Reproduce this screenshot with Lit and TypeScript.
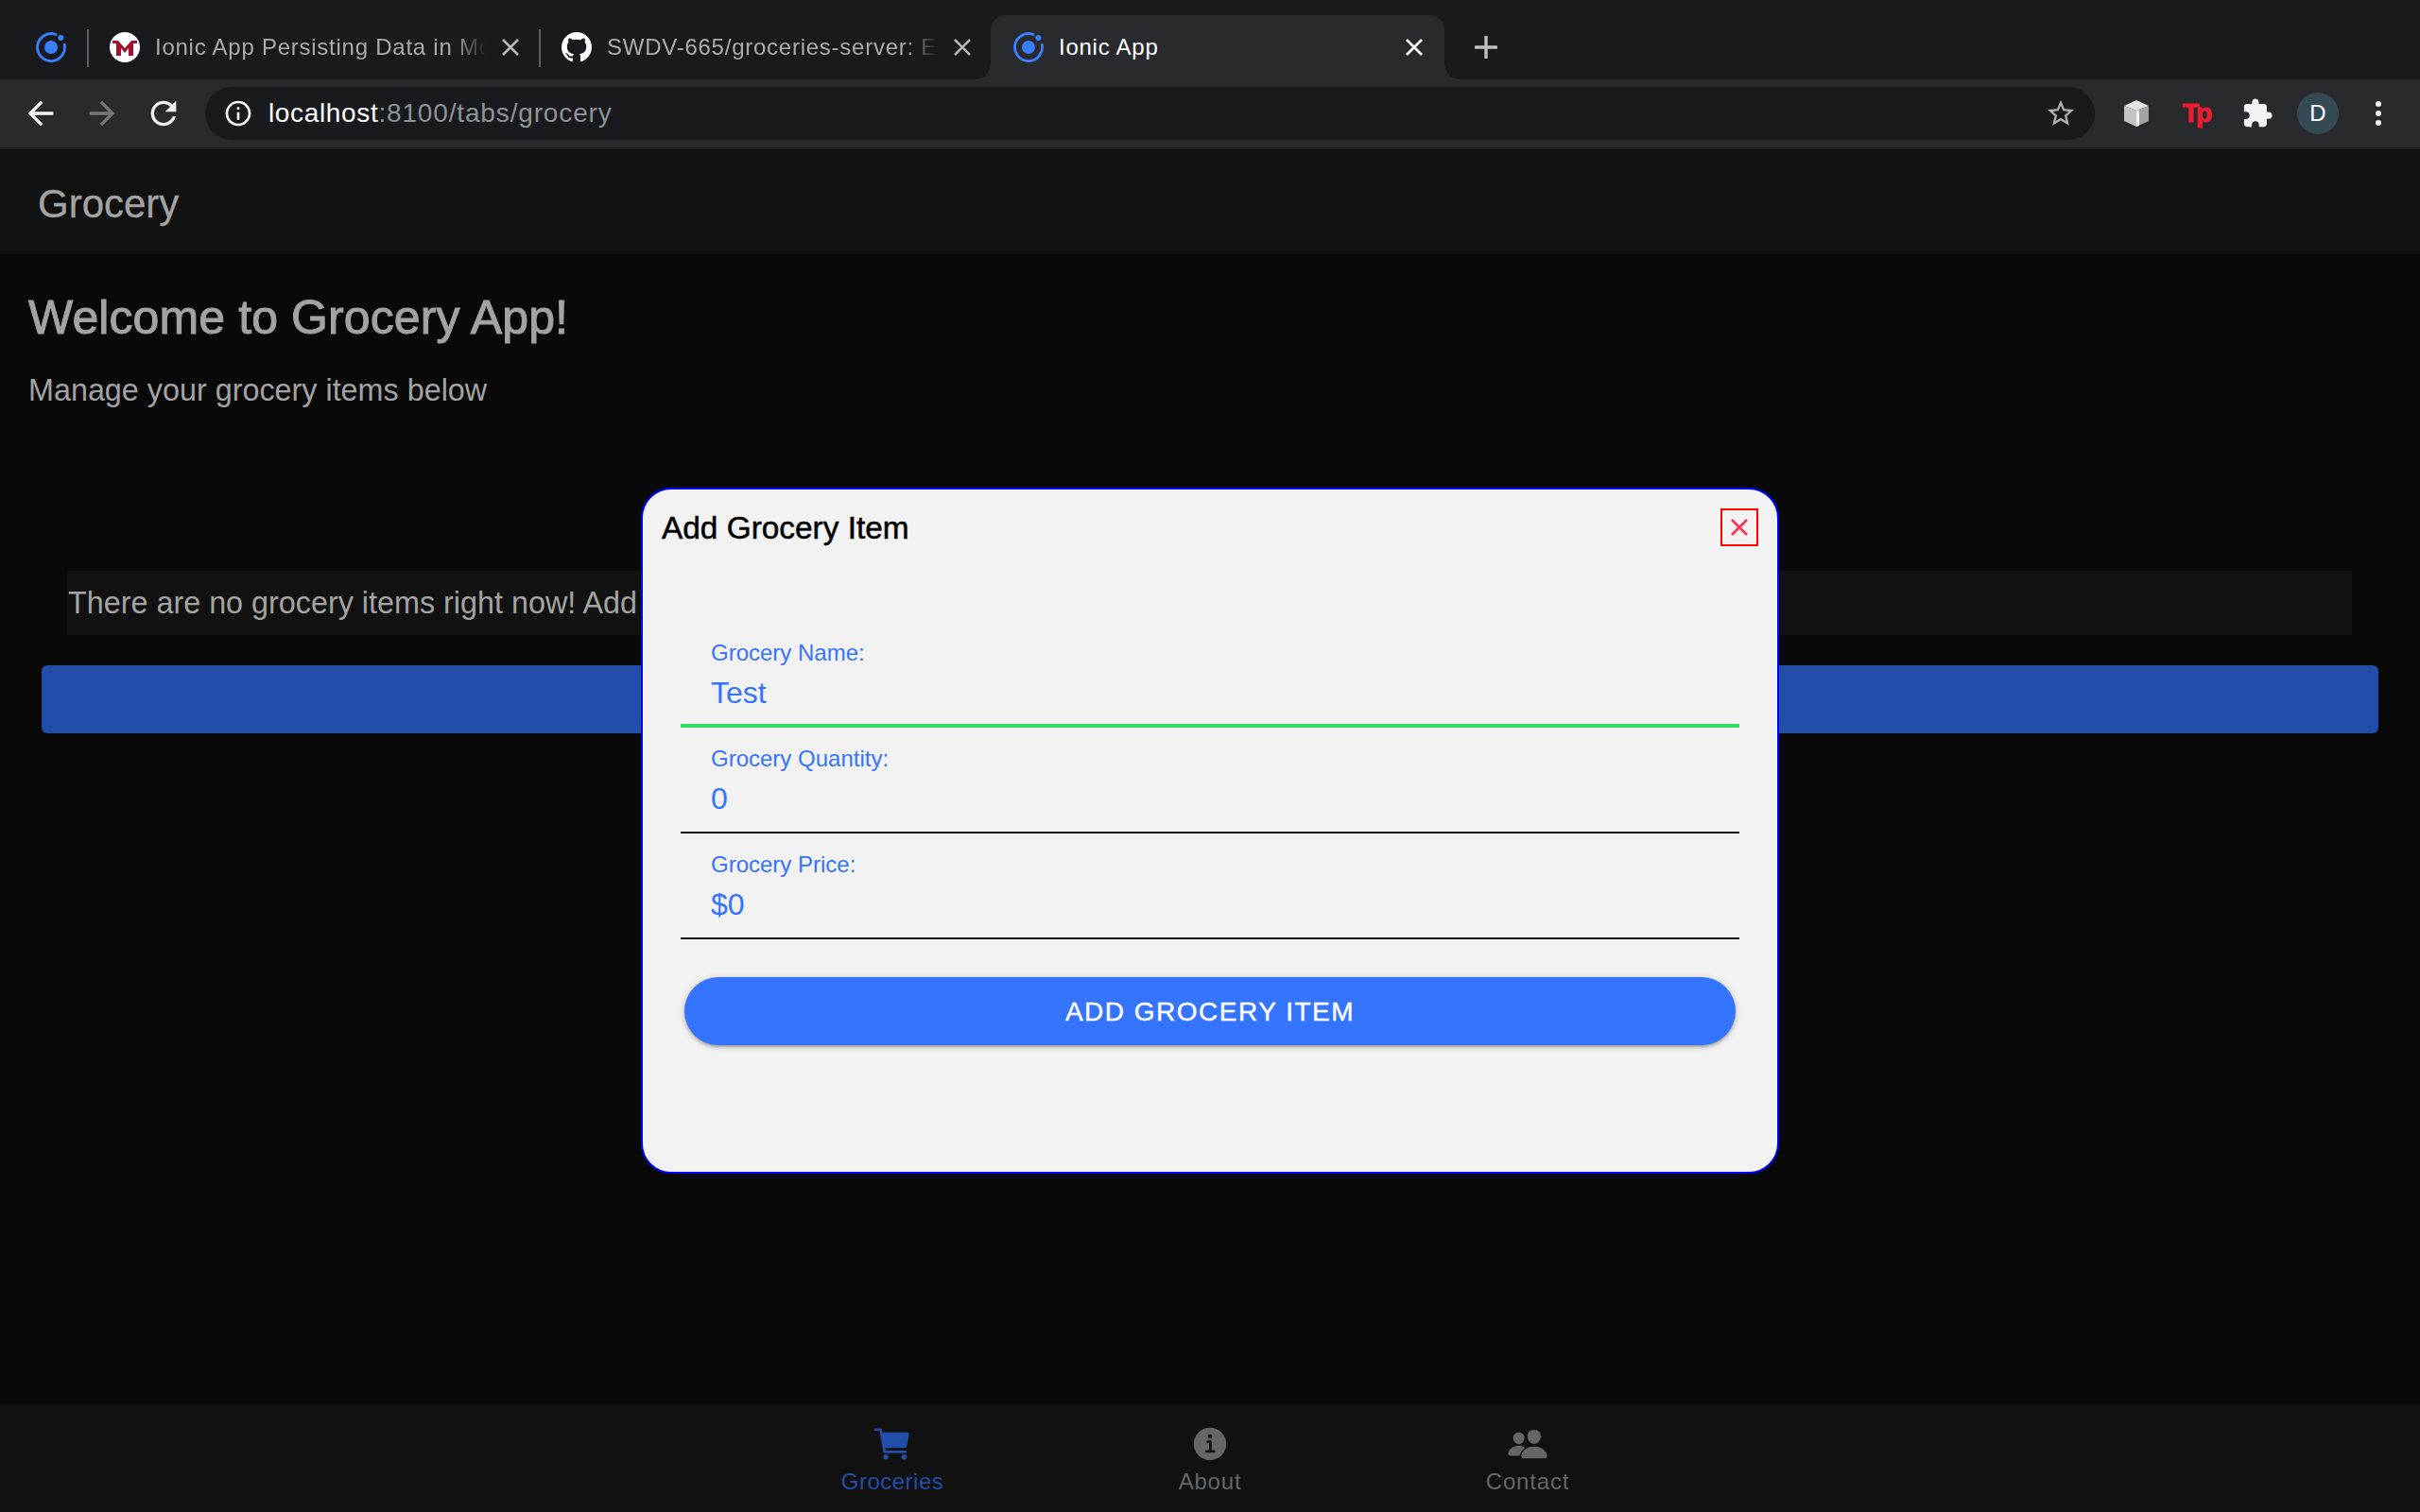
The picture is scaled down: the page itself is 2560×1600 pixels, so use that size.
import { LitElement, css, html, svg } from "lit";
import { customElement } from "lit/decorators.js";

const ionicLogo = html`<svg class="favicon" viewBox="0 0 32 32">
  <path d="M22.1 2.9A14.5 14.5 0 1 0 30 12.2" fill="none" stroke="#3880ff" stroke-width="2.8" />
  <circle cx="16" cy="16" r="7" fill="#3880ff" />
  <circle cx="26.4" cy="6" r="3" fill="#3880ff" />
</svg>`;

const mailLogo = html`<svg class="favicon" viewBox="0 0 32 32">
  <circle cx="16" cy="16" r="16" fill="#fff" />
  <polygon points="3,9 9,9 16,17 23,9 29,9 29,12 25,12 25,25 20,25 20,17 16,22 12,17 12,25 7,25 7,12 3,12" fill="#a3122a" />
</svg>`;

const githubLogo = html`<svg class="favicon" viewBox="0 0 16 16">
  <path fill="#fff" d="M8 0C3.58 0 0 3.58 0 8c0 3.54 2.29 6.53 5.47 7.59.4.07.55-.17.55-.38 0-.19-.01-.82-.01-1.49-2.01.37-2.53-.49-2.69-.94-.09-.23-.48-.94-.82-1.13-.28-.15-.68-.52-.01-.53.63-.01 1.08.58 1.23.82.72 1.21 1.87.87 2.33.66.07-.52.28-.87.51-1.07-1.78-.2-3.64-.89-3.64-3.95 0-.87.31-1.59.82-2.15-.08-.2-.36-1.02.08-2.12 0 0 .67-.21 2.2.82.64-.18 1.32-.27 2-.27s1.36.09 2 .27c1.53-1.04 2.2-.82 2.2-.82.44 1.1.16 1.92.08 2.12.51.56.82 1.27.82 2.15 0 3.07-1.87 3.75-3.65 3.95.29.25.54.73.54 1.48 0 1.07-.01 1.93-.01 2.2 0 .21.15.46.55.38A8.01 8.01 0 0 0 16 8c0-4.42-3.58-8-8-8z" />
</svg>`;

const closeGlyph = svg`<path d="M2 2l16 16M18 2L2 18" fill="none" stroke="currentColor" stroke-width="2.6" />`;

const cartIcon = svg`<circle cx="176" cy="416" r="32" /><circle cx="400" cy="416" r="32" />
  <path d="M456.8 120.78a23.92 23.92 0 00-18.56-8.78H133.89l-6.13-34.78A16 16 0 00112 64H48a16 16 0 000 32h50.58l45.66 258.78A16 16 0 00160 368h256a16 16 0 000-32H173.42l-5.64-32h241.66A24.07 24.07 0 00433 284.71l28.8-144a24 24 0 00-5-19.93z" />`;
const infoIcon = svg`<path d="M256 56C145.72 56 56 145.72 56 256s89.72 200 200 200 200-89.72 200-200S366.28 56 256 56zm0 82a26 26 0 11-26 26 26 26 0 0126-26zm48 226h-88a16 16 0 010-32h28v-88h-16a16 16 0 010-32h32a16 16 0 0116 16v104h28a16 16 0 010 32z" />`;
const peopleIcon = svg`<path d="M336 256c-20.56 0-40.44-9.18-56-25.84-15.13-16.25-24.37-37.92-26-61-1.74-24.62 5.77-47.26 21.14-63.76S312 80 336 80c23.83 0 45.38 9.06 60.7 25.52 15.47 16.62 23 39.22 21.26 63.63-1.67 23.11-10.9 44.77-26 61C376.44 246.82 356.57 256 336 256zM467.83 432H204.18a27.71 27.71 0 01-22-10.67 30.22 30.22 0 01-5.26-25.79c8.42-33.81 29.28-61.85 60.32-81.08C264.79 297.4 299.86 288 336 288c36.85 0 71 9 98.71 26.05 31.11 19.13 52 47.33 60.38 81.55a30.27 30.27 0 01-5.32 25.78A27.68 27.68 0 01467.83 432zM147 260c-35.19 0-66.13-32.72-69-72.93-1.42-20.6 5-39.65 18-53.62 12.86-13.83 31-21.45 51-21.45s38 7.66 50.93 21.57c13.1 14.08 19.5 33.09 18 53.52-2.87 40.2-33.8 72.91-68.93 72.91zM212.66 291.45c-17.59-8.6-40.42-12.9-65.65-12.9-29.46 0-58.07 7.68-80.57 21.62-25.51 15.83-42.67 38.88-49.6 66.71a27.39 27.39 0 005.36 23.73A25.32 25.32 0 0042.4 400h111a8 8 0 007.87-6.57c8.48-34.06 28.35-62.84 57.71-83.82a8 8 0 00-.63-11.39c-1.94-1.55-3.96-3.05-5.69-6.77z" />`;

const fields = [
  { label: "Grocery Name:", value: "Test", active: true },
  { label: "Grocery Quantity:", value: "0", active: false },
  { label: "Grocery Price:", value: "$0", active: false },
];

const bottomTabs = [
  { label: "Groceries", icon: cartIcon, selected: true },
  { label: "About", icon: infoIcon, selected: false },
  { label: "Contact", icon: peopleIcon, selected: false },
];

@customElement("app-root")
export class AppRoot extends LitElement {
  static styles = css`
    :host {
      display: flex;
      flex-direction: column;
      height: 1600px;
      background: #090909;
      font-family: "Liberation Sans", Arial, sans-serif;
      overflow: hidden;
    }
    svg {
      display: block;
      flex: none;
    }

    .tabstrip {
      display: flex;
      align-items: flex-start;
      height: 84px;
      padding-top: 16px;
      box-sizing: border-box;
      background: #191a1d;
      color: #a9abae;
      font-size: 24px;
      letter-spacing: 0.75px;
    }
    .favicon {
      width: 32px;
      height: 32px;
    }
    .pinned {
      display: flex;
      align-items: center;
      width: 92px;
      height: 68px;
      padding-left: 38px;
      box-sizing: border-box;
    }
    .tab {
      position: relative;
      display: flex;
      align-items: center;
      box-sizing: border-box;
      width: 478px;
      height: 68px;
      padding: 0 20px 0 24px;
      gap: 16px;
    }
    .tab.sep::before {
      content: "";
      position: absolute;
      left: 0;
      top: 15px;
      width: 2px;
      height: 40px;
      background: #5c5e62;
    }
    .tab-title {
      flex: 1;
      min-width: 0;
      white-space: nowrap;
      -webkit-mask-image: linear-gradient(to right, #000 calc(100% - 34px), transparent);
      mask-image: linear-gradient(to right, #000 calc(100% - 34px), transparent);
    }
    .tab-close {
      width: 20px;
      height: 20px;
      flex: none;
      color: #b4b6b9;
    }
    .tab.active {
      width: 480px;
      padding-right: 22px;
      background: #292a2d;
      border-radius: 16px 16px 0 0;
      color: #fff;
    }
    .tab.active .tab-title {
      -webkit-mask-image: none;
      mask-image: none;
    }
    .tab.active .tab-close {
      color: #fff;
    }
    .flare {
      position: absolute;
      bottom: 0;
      width: 16px;
      height: 16px;
    }
    .flare.left {
      left: -16px;
      background: radial-gradient(circle at 0 0, #191a1d 15.5px, #292a2d 16px);
    }
    .flare.right {
      right: -16px;
      background: radial-gradient(circle at 100% 0, #191a1d 15.5px, #292a2d 16px);
    }
    .new-tab {
      width: 24px;
      height: 24px;
      margin: 22px 0 0 32px;
      color: #bdc1c6;
    }

    .toolbar {
      display: flex;
      align-items: center;
      height: 72px;
      background: #292a2d;
      border-bottom: 2px solid #1f2023;
      padding: 0 24px 0 23px;
    }
    .nav-icon {
      width: 40px;
      height: 40px;
      margin-right: 25px;
      fill: #f1f3f4;
    }
    .nav-icon.off {
      fill: #75777b;
    }
    .omnibox {
      flex: none;
      display: flex;
      align-items: center;
      width: 1999px;
      height: 56px;
      margin-left: -1px;
      padding: 0 19px;
      box-sizing: border-box;
      border-radius: 28px;
      background: #191a1d;
      font-size: 28px;
      letter-spacing: 0.85px;
      color: #8e9195;
    }
    .omnibox .host {
      color: #fff;
      letter-spacing: 0.65px;
    }
    .info {
      width: 32px;
      height: 32px;
      fill: #f1f3f4;
      margin-right: 16px;
    }
    .url {
      flex: 1;
      white-space: nowrap;
    }
    .star {
      width: 34px;
      height: 34px;
      fill: #b0b2b5;
    }
    .ext {
      display: flex;
      flex: none;
      justify-content: center;
      align-items: center;
      width: 64px;
      height: 44px;
    }
    .ext.cube-slot {
      margin-left: 12px;
    }
    .cube {
      width: 30px;
      height: 30px;
      filter: blur(0.7px);
    }
    .tp {
      margin-left: -2px;
      color: #ed1c2e;
      font-size: 28px;
      font-weight: 700;
      letter-spacing: -3px;
      line-height: 44px;
      -webkit-text-stroke: 1px #ed1c2e;
    }
    .puzzle {
      width: 34px;
      height: 34px;
      fill: #f1f3f4;
    }
    .avatar {
      flex: none;
      width: 44px;
      height: 44px;
      margin: 0 10px;
      border-radius: 50%;
      background: #364a56;
      color: #fff;
      font-size: 24px;
      line-height: 44px;
      text-align: center;
    }
    .dots {
      display: flex;
      flex: none;
      flex-direction: column;
      align-items: center;
      gap: 4px;
      width: 64px;
    }
    .dots i {
      width: 6px;
      height: 6px;
      border-radius: 50%;
      background: #f1f3f4;
    }

    .page {
      position: relative;
      flex: 1;
      display: flex;
      flex-direction: column;
      min-height: 0;
      color: #a3a3a3;
    }
    .page-header {
      display: flex;
      align-items: center;
      flex: none;
      box-sizing: border-box;
      height: 111px;
      padding: 4px 0 0 40px;
      background: #111;
      font-size: 42px;
      -webkit-text-stroke: 0.3px #a3a3a3;
    }
    .content {
      flex: 1;
      padding: 0 44px;
    }
    h1 {
      margin: 37px 0 0 -14px;
      font-size: 50px;
      font-weight: 400;
      letter-spacing: 0.1px;
      line-height: 60px;
      -webkit-text-stroke: 1px #a3a3a3;
    }
    .lead {
      margin: 25px 0 0 -14px;
      font-size: 32.35px;
      line-height: 44px;
    }
    .empty {
      display: flex;
      align-items: center;
      height: 68px;
      margin: 169px 28px 0 27px;
      padding: 1px 0 0 1px;
      box-sizing: border-box;
      background: #111;
      font-size: 32.35px;
      white-space: nowrap;
      overflow: hidden;
    }
    .add-bar {
      height: 72px;
      margin-top: 32px;
      border-radius: 6px;
      background: #224ea9;
    }
    .tabbar {
      display: flex;
      justify-content: center;
      flex: none;
      height: 114px;
      background: #111;
      color: #666;
    }
    .tabbar-item {
      display: flex;
      flex-direction: column;
      align-items: center;
      box-sizing: border-box;
      width: 336px;
      padding-top: 20px;
      font-size: 24px;
      letter-spacing: 0.8px;
      line-height: 28px;
    }
    .tabbar-item svg {
      width: 44px;
      height: 44px;
      margin-bottom: 4px;
      fill: currentColor;
    }
    .tabbar-item.selected {
      color: #224ea9;
      letter-spacing: 0.5px;
    }

    .overlay {
      position: absolute;
      inset: 0;
      display: flex;
      align-items: center;
      justify-content: center;
    }
    .modal {
      box-sizing: border-box;
      width: 1204px;
      height: 726px;
      padding: 20px 20px 0;
      border: 2px solid #0000ff;
      border-radius: 32px;
      background: #f2f2f2;
    }
    .modal-head {
      display: flex;
      align-items: center;
      justify-content: space-between;
      height: 40px;
      color: #000;
      font-size: 33.4px;
    }
    .modal-head span {
      padding-top: 2px;
      -webkit-text-stroke: 0.5px #000;
    }
    .modal-close {
      box-sizing: border-box;
      width: 40px;
      height: 40px;
      padding: 8px;
      border: 2px solid #f00;
      color: #ff3355;
    }
    .modal-close svg {
      width: 20px;
      height: 20px;
    }
    form {
      margin: 80px 20px 0;
    }
    .field {
      box-sizing: border-box;
      height: 112px;
      padding: 19px 0 0 32px;
      border-bottom: 2px solid #111;
      color: #3574ff;
    }
    .field.active {
      border-bottom: 4px solid #2fdb62;
    }
    .field label {
      display: block;
      font-size: 24px;
      line-height: 28px;
    }
    .field div {
      margin-top: 9px;
      font-size: 32px;
      line-height: 38px;
    }
    .submit {
      display: block;
      box-sizing: border-box;
      width: 1112px;
      height: 72px;
      margin: 40px 4px 0;
      padding: 2px 0 0;
      border: 0;
      border-radius: 36px;
      background: #3574ff;
      box-shadow: 0 3px 3px -2px rgba(0, 0, 0, 0.2), 0 2px 4px rgba(0, 0, 0, 0.2), 0 1px 8px rgba(0, 0, 0, 0.12);
      color: #fff;
      font-family: inherit;
      font-size: 28px;
      letter-spacing: 1.5px;
      -webkit-text-stroke: 0.4px #fff;
    }
  `;

  private closeIcon() {
    return html`<svg class="tab-close" viewBox="0 0 20 20">${closeGlyph}</svg>`;
  }

  private renderTabstrip() {
    return html`<div class="tabstrip">
      <div class="pinned">${ionicLogo}</div>
      <div class="tab sep">
        ${mailLogo}
        <span class="tab-title">Ionic App Persisting Data in Mo</span>
        ${this.closeIcon()}
      </div>
      <div class="tab sep">
        ${githubLogo}
        <span class="tab-title">SWDV-665/groceries-server: E</span>
        ${this.closeIcon()}
      </div>
      <div class="tab active">
        <i class="flare left"></i>
        ${ionicLogo}
        <span class="tab-title">Ionic App</span>
        ${this.closeIcon()}
        <i class="flare right"></i>
      </div>
      <svg class="new-tab" viewBox="0 0 24 24">
        <path d="M12 1v22M1 12h22" fill="none" stroke="currentColor" stroke-width="3.4" stroke-linecap="round" />
      </svg>
    </div>`;
  }

  private renderToolbar() {
    return html`<div class="toolbar">
      <svg class="nav-icon" viewBox="0 0 24 24"><path d="M20 11H7.83l5.59-5.59L12 4l-8 8 8 8 1.41-1.41L7.83 13H20v-2z" /></svg>
      <svg class="nav-icon off" viewBox="0 0 24 24"><path d="M4 11h12.17l-5.59-5.59L12 4l8 8-8 8-1.41-1.41L16.17 13H4v-2z" /></svg>
      <svg class="nav-icon" viewBox="0 0 24 24"><path d="M17.65 6.35C16.2 4.9 14.21 4 12 4c-4.42 0-7.99 3.58-7.99 8s3.57 8 7.99 8c3.73 0 6.84-2.55 7.73-6h-2.08c-.82 2.33-3.04 4-5.65 4-3.31 0-6-2.69-6-6s2.69-6 6-6c1.66 0 3.14.69 4.22 1.78L13 11h7V4l-2.35 2.35z" /></svg>
      <div class="omnibox">
        <svg class="info" viewBox="0 0 24 24"><path d="M11 7h2v2h-2zm0 4h2v6h-2zm1-9C6.48 2 2 6.48 2 12s4.48 10 10 10 10-4.48 10-10S17.52 2 12 2zm0 18c-4.41 0-8-3.59-8-8s3.59-8 8-8 8 3.59 8 8-3.59 8-8 8z" /></svg>
        <span class="url"><span class="host">localhost</span>:8100/tabs/grocery</span>
        <svg class="star" viewBox="0 0 24 24"><path d="M22 9.24l-7.19-.62L12 2 9.19 8.63 2 9.24l5.46 4.73L5.82 21 12 17.27 18.18 21l-1.63-7.03L22 9.24zM12 15.4l-3.76 2.27 1-4.28-3.32-2.88 4.38-.38L12 6.1l1.71 4.04 4.38.38-3.32 2.88 1 4.28L12 15.4z" /></svg>
      </div>
      <div class="ext cube-slot">
        <svg class="cube" viewBox="0 0 30 30">
          <polygon points="15,1 28,7 15,12 2,7" fill="#e4e4e4" />
          <polygon points="2,7 15,12 15,29 2,23" fill="#c4c4c4" />
          <polygon points="15,12 28,7 28,23 15,29" fill="#a2a2a2" />
          <polygon points="15,12 18,11 18,28 15,29" fill="#f2f2f2" />
        </svg>
      </div>
      <div class="ext"><span class="tp">Tp</span></div>
      <div class="ext">
        <svg class="puzzle" viewBox="0 0 24 24"><path d="M20.5 11H19V7c0-1.1-.9-2-2-2h-4V3.5C13 2.12 11.88 1 10.5 1S8 2.12 8 3.5V5H4c-1.1 0-1.99.9-1.99 2v3.8H3.5c1.49 0 2.7 1.21 2.7 2.7s-1.21 2.7-2.7 2.7H2V20c0 1.1.9 2 2 2h3.8v-1.5c0-1.49 1.21-2.7 2.7-2.7 1.49 0 2.7 1.21 2.7 2.7V22H17c1.1 0 2-.9 2-2v-4h1.5c1.38 0 2.5-1.12 2.5-2.5S21.88 11 20.5 11z" /></svg>
      </div>
      <div class="avatar">D</div>
      <div class="dots"><i></i><i></i><i></i></div>
    </div>`;
  }

  private renderModal() {
    return html`<div class="overlay">
      <div class="modal">
        <div class="modal-head">
          <span>Add Grocery Item</span>
          <div class="modal-close"><svg viewBox="0 0 20 20">${closeGlyph}</svg></div>
        </div>
        <form>
          ${fields.map(
            (f) => html`<div class="field ${f.active ? "active" : ""}">
              <label>${f.label}</label>
              <div>${f.value}</div>
            </div>`
          )}
          <button class="submit" type="button">ADD GROCERY ITEM</button>
        </form>
      </div>
    </div>`;
  }

  render() {
    return html`
      ${this.renderTabstrip()} ${this.renderToolbar()}
      <div class="page">
        <div class="page-header">Grocery</div>
        <div class="content">
          <h1>Welcome to Grocery App!</h1>
          <p class="lead">Manage your grocery items below</p>
          <div class="empty">There are no grocery items right now! Add some to get started</div>
          <div class="add-bar"></div>
        </div>
        <div class="tabbar">
          ${bottomTabs.map(
            (t) => html`<div class="tabbar-item ${t.selected ? "selected" : ""}">
              <svg viewBox="0 0 512 512">${t.icon}</svg>
              ${t.label}
            </div>`
          )}
        </div>
        ${this.renderModal()}
      </div>
    `;
  }
}
